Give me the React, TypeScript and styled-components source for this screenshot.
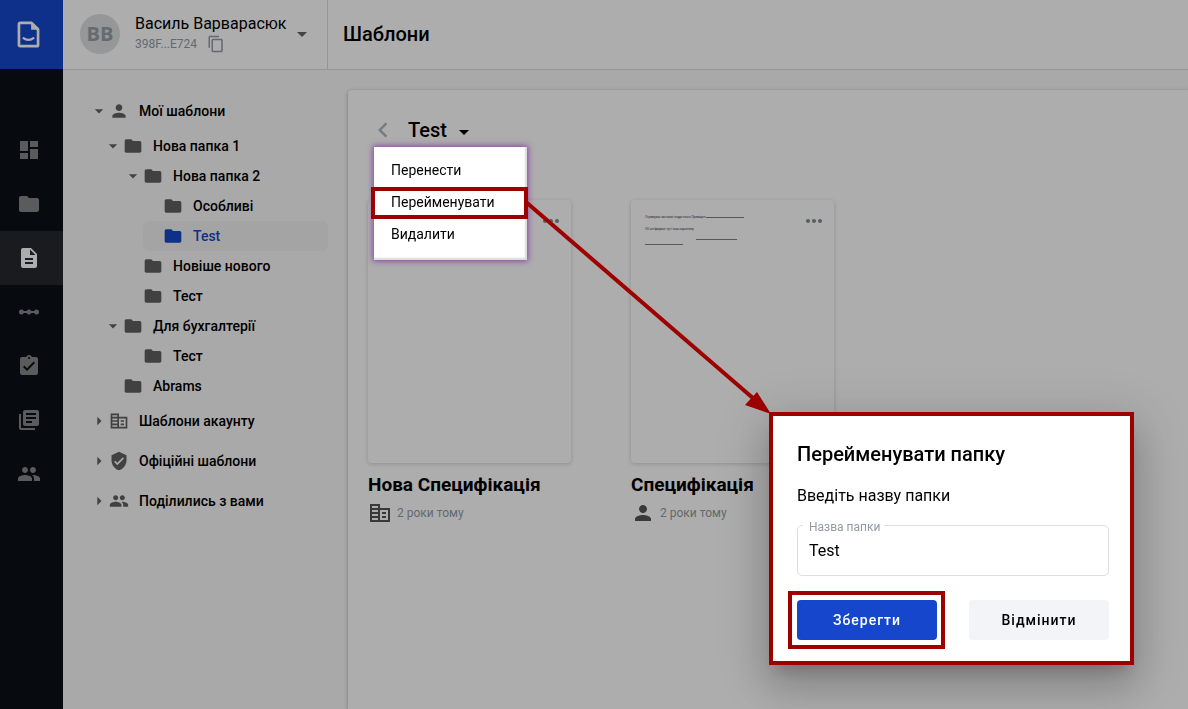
import React from "react";
import styled, { createGlobalStyle } from "styled-components";
import {
  MdDashboard, MdFolder, MdDescription, MdLinearScale, MdAssignmentTurnedIn, MdLibraryBooks,
  MdPeople, MdPerson, MdVerifiedUser, MdArrowDropDown, MdArrowRight, MdContentCopy, MdMoreHoriz,
  MdChevronLeft,
} from "react-icons/md";

const Global = createGlobalStyle`
  * { box-sizing: border-box; }
  body { margin: 0; font-family: Roboto, "Liberation Sans", sans-serif; color: #000; background: #f9f9f9; }
  button, input { font-family: inherit; color: inherit; }
  button { border: 0; padding: 0; background: none; cursor: pointer; }
  h1, h2, h3, p, ul { margin: 0; padding: 0; }
  svg { display: block; flex: none; }
`;

const Page = styled.div`
  display: flex;
  min-height: 100vh;
`;
const Rail = styled.nav`
  flex: none;
  width: 63px;
  background: #0b1016;
`;
const Logo = styled.a`
  display: flex;
  align-items: center;
  padding-left: 17px;
  height: 69px;
  margin-bottom: 54px;
  background: #1546cc;
`;
const RailLink = styled.a<{ $active?: boolean }>`
  display: flex;
  align-items: center;
  padding-left: 17px;
  height: 54px;
  color: ${(p) => (p.$active ? "#fff" : "#85878a")};
  background: ${(p) => (p.$active ? "#27292f" : "transparent")};
`;
const Main = styled.div`
  flex: 1;
  min-width: 0;
  display: flex;
  flex-direction: column;
`;
const Header = styled.header`
  display: flex;
  height: 70px;
  background: #fff;
  border-bottom: 1px solid #dcdee0;
`;
const Account = styled.button`
  display: flex;
  align-items: center;
  width: 265px;
  padding: 0 13px 2px 17px;
  border-right: 1px solid #dcdee0;
  text-align: left;
`;
const Avatar = styled.span`
  width: 40px;
  height: 40px;
  margin-right: 15px;
  border-radius: 50%;
  background: #dcdfe2;
  color: #969ea6;
  font: 700 20px/40px "Open Sans", sans-serif;
  text-align: center;
`;
const AccountText = styled.span`
  flex: 1;
  font-size: 16px;
  line-height: 20px;
  white-space: nowrap;
`;
const AccountId = styled.span`
  display: flex;
  align-items: center;
  gap: 10px;
  font-size: 12px;
  color: #929ba5;
`;
const PageTitle = styled.h1`
  padding-left: 15px;
  font-size: 20px;
  font-weight: 500;
  line-height: 68px;
`;
const Columns = styled.div`
  flex: 1;
  display: flex;
`;
const Sidebar = styled.aside`
  flex: none;
  width: 284px;
  padding: 21px 19px 0 0;
`;
const TreeList = styled.ul`
  list-style: none;
`;
const Node = styled.a<{ $indent: number; $tall?: boolean; $selected?: boolean }>`
  display: flex;
  align-items: center;
  height: ${(p) => (p.$tall ? 40 : 30)}px;
  margin-left: ${(p) => p.$indent}px;
  border-radius: 6px;
  font-size: 14px;
  font-weight: 500;
  text-decoration: none;
  color: ${(p) => (p.$selected ? "#1546cc" : "#000")};
  background: ${(p) => (p.$selected ? "#f2f2f4" : "transparent")};
`;
const Caret = styled.span`
  width: 20px;
  color: #616365;
`;
const NodeIcon = styled.span<{ $selected?: boolean }>`
  width: 30px;
  color: ${(p) => (p.$selected ? "#1546cc" : "#616161")};
`;
const Panel = styled.main`
  flex: 1;
  margin-top: 20px;
  margin-left: 1px;
  padding: 28px 20px 0;
  background: #fff;
  border-top-left-radius: 4px;
  box-shadow: 0 1px 4px rgba(0, 0, 0, 0.3);
`;
const FolderBar = styled.div`
  position: relative;
  display: flex;
  align-items: center;
  height: 24px;
  margin-bottom: 58px;
`;
const Back = styled.button`
  width: 40px;
  color: #afb6be;
`;
const FolderName = styled.button`
  display: flex;
  align-items: center;
  gap: 5px;
  font-size: 20px;
  font-weight: 500;
  svg { margin-top: 3px; }
`;
const Cards = styled.div`
  display: flex;
  flex-wrap: wrap;
  gap: 60px;
`;
const Card = styled.article`
  width: 203px;
`;
const Preview = styled.div`
  display: flex;
  justify-content: space-between;
  height: 263px;
  padding: 9px 8px 0 14px;
  border-radius: 4px;
  box-shadow: 0 1px 4px rgba(0, 0, 0, 0.18);
`;
const Paper = styled.div`
  width: 100px;
  padding-top: 6px;
  font: 400 3px/5px "Liberation Sans", sans-serif;
  color: #333;
  white-space: nowrap;
`;
const PaperLine = styled.p<{ $gap?: number; $right?: boolean }>`
  display: flex;
  align-items: center;
  gap: 1px;
  height: 5px;
  justify-content: ${(p) => (p.$right ? "flex-end" : "flex-start")};
  padding-right: ${(p) => (p.$right ? 8 : 0)}px;
  margin-top: ${(p) => p.$gap || 0}px;
`;
const Rule = styled.span<{ $w: number }>`
  width: ${(p) => p.$w}px;
  height: 1px;
  background: #808285;
`;
const More = styled.button`
  height: 24px;
  margin-left: auto;
  color: #808993;
`;
const CardTitle = styled.h3`
  margin-top: 10px;
  font-size: 19px;
  font-weight: 700;
  line-height: 24px;
  white-space: nowrap;
`;
const CardMeta = styled.p`
  display: flex;
  align-items: center;
  gap: 5px;
  height: 24px;
  margin-top: 4px;
  font-size: 12px;
  color: #929ba5;
  svg { color: #555; }
`;
const Shade = styled.div`
  position: fixed;
  inset: 0;
  background: rgba(0, 0, 0, 0.32);
`;
const Menu = styled.div`
  position: absolute;
  z-index: 2;
  left: 6px;
  top: 29px;
  width: 153px;
  padding: 8px 0 9px;
  background: #fff;
  box-shadow: 0 0 6px 1px #8a3fa5, inset -2px -2px 2px rgba(0, 0, 0, 0.15);
`;
const MenuItem = styled.button<{ $marked?: boolean }>`
  display: block;
  width: 157px;
  height: 32px;
  margin-left: -3px;
  padding: 0 0 2px 20px;
  font-size: 14px;
  text-align: left;
  position: relative;
  box-shadow: ${(p) => (p.$marked ? "inset 0 0 0 4px #9e0000" : "none")};
`;
const Arrow = styled.svg`
  position: fixed;
  left: 520px;
  top: 195px;
  z-index: 3;
  pointer-events: none;
`;
const Dialog = styled.form`
  position: fixed;
  z-index: 4;
  right: 54px;
  bottom: 44px;
  width: 365px;
  padding: 24px 21px 12px 24px;
  border: 4px solid #9e0000;
  background: #fff;
  box-shadow: 0 11px 15px -7px rgba(0, 0, 0, 0.2), 0 24px 38px 3px rgba(0, 0, 0, 0.14), 0 9px 46px 8px rgba(0, 0, 0, 0.12);
`;
const DialogTitle = styled.h2`
  font-size: 20px;
  font-weight: 500;
  line-height: 28px;
`;
const DialogText = styled.p`
  margin-top: 16px;
  font-size: 16px;
  line-height: 24px;
`;
const Field = styled.fieldset`
  height: 60px;
  margin: 8px 0 0;
  padding: 0 11px;
  border: 1px solid #dcdee0;
  border-radius: 5px;
`;
const FieldLegend = styled.legend`
  height: 18px;
  margin-left: -6px;
  padding: 0 4px 0 6px;
  font-size: 12px;
  line-height: 22px;
  color: #929ba5;
`;
const FieldInput = styled.input`
  display: block;
  width: 100%;
  height: 32px;
  padding: 0;
  border: 0;
  outline: 0;
  font-size: 16px;
  background: none;
`;
const Actions = styled.div`
  display: flex;
  justify-content: space-between;
  margin-top: 15px;
`;
const Action = styled.button<{ $primary?: boolean }>`
  width: 140px;
  height: 40px;
  margin: 9px 0 0;
  border-radius: 4px;
  font-size: 14px;
  font-weight: 500;
  letter-spacing: 1px;
  color: ${(p) => (p.$primary ? "#fff" : "#000")};
  background: ${(p) => (p.$primary ? "#1546cc" : "#f3f4f7")};
`;
const Marked = styled.span`
  display: flex;
  margin: 0 0 0 -9px;
  padding: 5px 4px 5px 5px;
  border: 4px solid #9e0000;
  ${Action} { margin: 0; }
`;

function OfficeIcon({ size }: { size: number }) {
  return (
    <svg width={size} height={size} viewBox="0 0 24 24" fill="currentColor">
      <path d="M12 7V3H2v18h20V7H12zM10 19H4v-2h6v2zm0-4H4v-2h6v2zm0-4H4V9h6v2zm0-4H4V5h6v2zm10 12h-8V9h8v10zm-2-8h-4v2h4v-2zm0 4h-4v2h4v-2z" />
    </svg>
  );
}

const rail = [MdDashboard, MdFolder, MdDescription, MdLinearScale, MdAssignmentTurnedIn, MdLibraryBooks, MdPeople];
const railNames = ["Dashboard", "Folders", "Templates", "Flows", "Tasks", "Library", "People"];

type TreeNode = { label: string; indent: number; open?: boolean; closed?: boolean; icon?: React.ElementType; selected?: boolean };
const tree: TreeNode[] = [
  { label: "Мої шаблони", indent: 26, open: true, icon: MdPerson },
  { label: "Нова папка 1", indent: 40, open: true },
  { label: "Нова папка 2", indent: 60, open: true },
  { label: "Особливі", indent: 80 },
  { label: "Test", indent: 80, selected: true },
  { label: "Новіше нового", indent: 60 },
  { label: "Тест", indent: 60 },
  { label: "Для бухгалтерії", indent: 40, open: true },
  { label: "Тест", indent: 60 },
  { label: "Abrams", indent: 40 },
  { label: "Шаблони акаунту", indent: 26, closed: true, icon: OfficeIcon },
  { label: "Офіційні шаблони", indent: 26, closed: true, icon: MdVerifiedUser },
  { label: "Поділились з вами", indent: 26, closed: true, icon: MdPeople },
];

export default function App() {
  return (
    <>
      <Global />
      <Page>
        <Rail>
          <Logo href="#" aria-label="Home">
            <svg width="23" height="27" viewBox="0.5 0.5 22 26" fill="none" stroke="#fff" strokeWidth="2.6">
              <path d="M3.5 2.3H14.5L20.7 8.5V23.5Q20.7 24.7 19.5 24.7H3.5Q2.3 24.7 2.3 23.5V3.5Q2.3 2.3 3.5 2.3Z" strokeLinejoin="round" />
              <path d="M14 2V9H21Z" fill="#fff" stroke="none" />
              <path d="M6 16.5Q11.5 20.8 17 16.5" strokeWidth="2.2" />
            </svg>
          </Logo>
          {rail.map((Icon, i) => (
            <RailLink key={i} href="#" $active={i === 2} aria-label={railNames[i]}><Icon size={24} /></RailLink>
          ))}
        </Rail>
        <Main>
          <Header>
            <Account type="button">
              <Avatar>BB</Avatar>
              <AccountText>
                Василь Варварасюк
                <AccountId>398F...E724 <MdContentCopy size={18} /></AccountId>
              </AccountText>
              <MdArrowDropDown size={24} color="#616365" />
            </Account>
            <PageTitle>Шаблони</PageTitle>
          </Header>
          <Columns>
            <Sidebar>
              <TreeList>
                {tree.map((n, i) => {
                  const Icon = n.icon || MdFolder;
                  return (
                    <li key={i}>
                      <Node href="#" $indent={n.indent} $tall={!!n.icon} $selected={n.selected}>
                        <Caret>{n.open ? <MdArrowDropDown size={20} /> : n.closed ? <MdArrowRight size={20} /> : null}</Caret>
                        <NodeIcon $selected={n.selected}><Icon size={20} /></NodeIcon>
                        {n.label}
                      </Node>
                    </li>
                  );
                })}
              </TreeList>
            </Sidebar>
            <Panel>
              <FolderBar>
                <Back type="button" aria-label="Back"><MdChevronLeft size={30} /></Back>
                <FolderName type="button">Test <MdArrowDropDown size={24} /></FolderName>
                <Menu>
                  <MenuItem type="button">Перенести</MenuItem>
                  <MenuItem type="button" $marked>Перейменувати</MenuItem>
                  <MenuItem type="button">Видалити</MenuItem>
                </Menu>
              </FolderBar>
              <Cards>
                <Card>
                  <Preview><More type="button" aria-label="More"><MdMoreHoriz size={24} /></More></Preview>
                  <CardTitle>Нова Специфікація</CardTitle>
                  <CardMeta><OfficeIcon size={24} />2 роки тому</CardMeta>
                </Card>
                <Card>
                  <Preview>
                    <Paper>
                      <PaperLine>Отримувач числової згоди плата Приміщен <Rule $w={38} /></PaperLine>
                      <PaperLine $gap={7}>Об’єкт/формат тут і ваш карантину</PaperLine>
                      <PaperLine $gap={5} $right><Rule $w={41} /></PaperLine>
                      <PaperLine><Rule $w={38} /></PaperLine>
                    </Paper>
                    <More type="button" aria-label="More"><MdMoreHoriz size={24} /></More>
                  </Preview>
                  <CardTitle>Специфікація</CardTitle>
                  <CardMeta><MdPerson size={24} />2 роки тому</CardMeta>
                </Card>
              </Cards>
            </Panel>
          </Columns>
        </Main>
      </Page>
      <Shade />
      <Arrow width="256" height="224" viewBox="0 0 256 224">
        <path d="M6 7L234 204" stroke="#9e0000" strokeWidth="4" />
        <path d="M251 219L225 210L237 197Z" fill="#9e0000" />
      </Arrow>
      <Dialog onSubmit={(e: React.FormEvent) => e.preventDefault()}>
        <DialogTitle>Перейменувати папку</DialogTitle>
        <DialogText>Введіть назву папки</DialogText>
        <Field>
          <FieldLegend><label htmlFor="folder">Назва папки</label></FieldLegend>
          <FieldInput id="folder" defaultValue="Test" />
        </Field>
        <Actions>
          <Marked><Action type="submit" $primary>Зберегти</Action></Marked>
          <Action type="button">Відмінити</Action>
        </Actions>
      </Dialog>
    </>
  );
}
